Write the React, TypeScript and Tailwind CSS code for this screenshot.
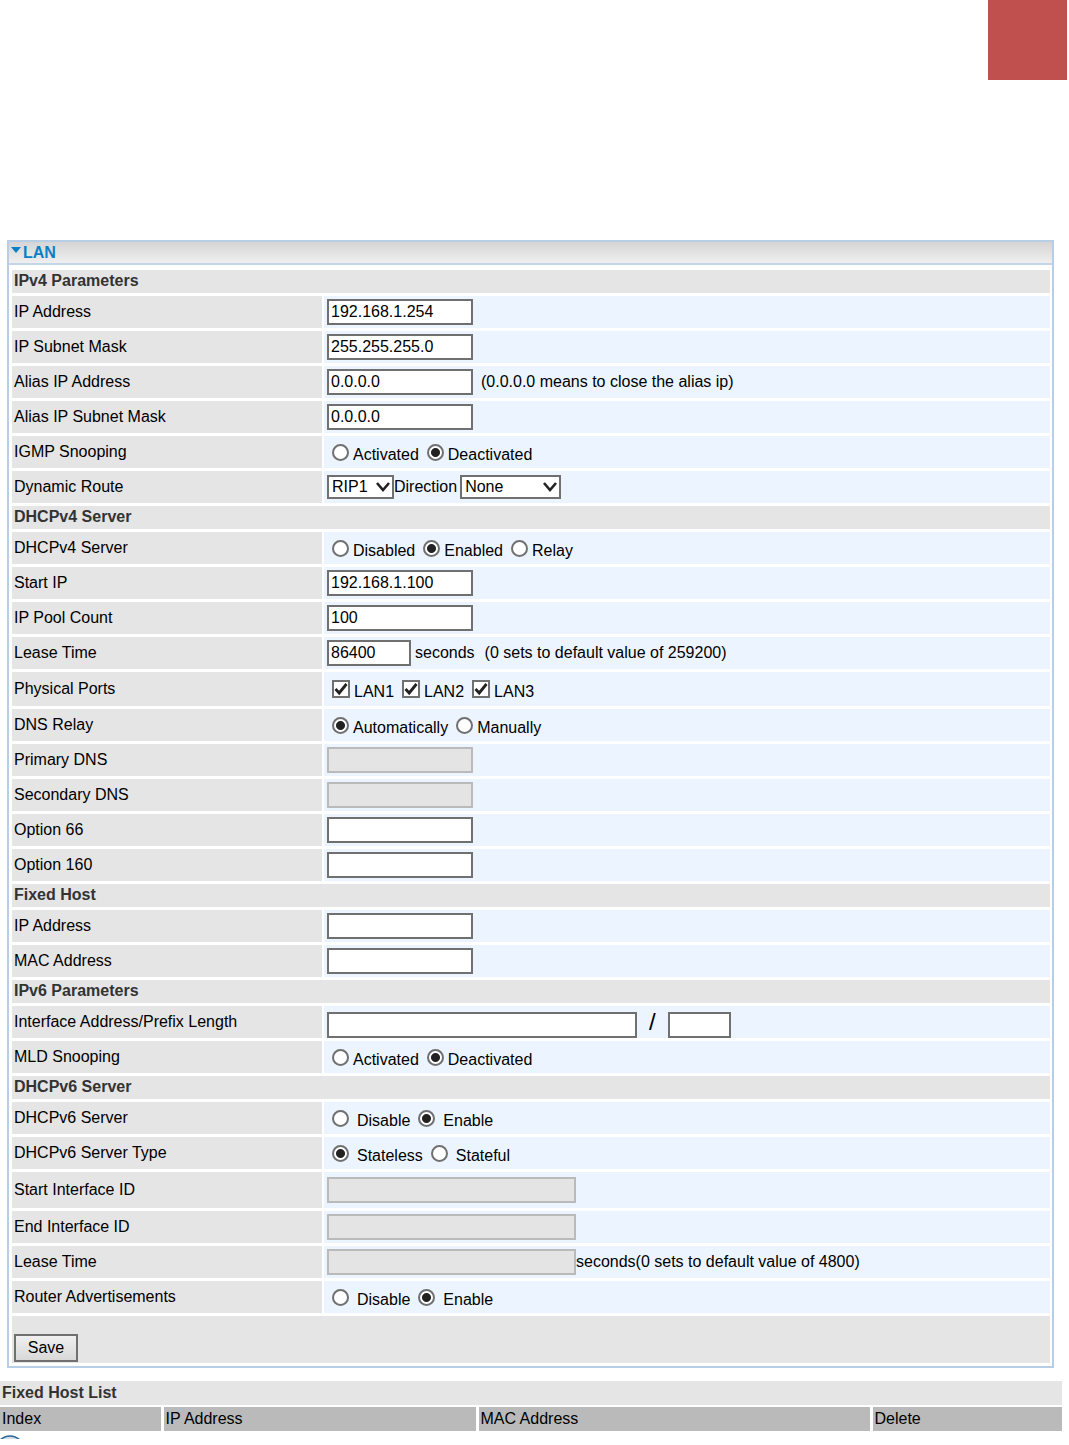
import { useId } from "react";
import type { ReactNode } from "react";

function Section({ title }: { title: string }) {
  return (
    <h3 className="h-[23px] bg-[#e5e5e5] pl-0.5 text-[16px] leading-[22px] font-bold text-[#333]">
      {title}
    </h3>
  );
}

type RowProps = {
  label: string;
  htmlFor?: string;
  className?: string;
  children: ReactNode;
};

function Row({ label, htmlFor, className = "h-8", children }: RowProps) {
  return (
    <div className={`flex gap-0.5 ${className}`}>
      <div className="flex w-[310px] shrink-0 items-center bg-[#e5e5e5] pb-[inherit] pl-0.5">
        {htmlFor ? <label htmlFor={htmlFor}>{label}</label> : <span>{label}</span>}
      </div>
      <div className="flex flex-1 items-center bg-[#ecf5ff] pl-[3px]">{children}</div>
    </div>
  );
}

type FieldProps = {
  id?: string;
  value?: string;
  width?: string;
  disabled?: boolean;
  label?: string;
};

function Field({ id, value = "", width = "w-[146px]", disabled, label }: FieldProps) {
  return (
    <input
      id={id}
      type="text"
      defaultValue={value}
      disabled={disabled}
      aria-label={label}
      className={`h-[26px] shrink-0 border-2 border-[#707070] bg-white px-0.5 disabled:border-[#bababa] disabled:bg-[#e4e4e4] ${width}`}
    />
  );
}

function TextRow({ label, className, after, ...field }: FieldProps & { label: string; className?: string; after?: ReactNode }) {
  const id = useId();
  return (
    <Row label={label} htmlFor={id} className={className}>
      <Field id={id} {...field} />
      {after}
    </Row>
  );
}

type RadiosProps = {
  name: string;
  options: string[];
  selected: string;
  spaced?: boolean;
};

function Radios({ name, options, selected, spaced }: RadiosProps) {
  return (
    <div className="flex gap-2 pl-[5px]">
      {options.map((option) => (
        <label key={option} className={`flex items-center ${spaced ? "gap-2" : "gap-1"}`}>
          <input
            type="radio"
            name={name}
            defaultChecked={option === selected}
            className="size-[17px] appearance-none rounded-full border-2 border-[#707070] bg-white checked:bg-[radial-gradient(circle,#222_4px,#fff_5px)]"
          />
          <span className="pt-1.5">{option}</span>
        </label>
      ))}
    </div>
  );
}

function Port({ name }: { name: string }) {
  return (
    <label className="flex items-center gap-1">
      <span className="grid">
        <input
          type="checkbox"
          defaultChecked
          className="peer col-start-1 row-start-1 size-[18px] appearance-none border-2 border-[#707070] bg-white"
        />
        <svg
          viewBox="0 0 18 18"
          className="pointer-events-none invisible col-start-1 row-start-1 size-[18px] peer-checked:visible"
        >
          <path d="M3.5 9L7.2 13L14.5 4" fill="none" stroke="#222" strokeWidth="2.8" />
        </svg>
      </span>
      <span className="pt-1.5">{name}</span>
    </label>
  );
}

function Dropdown({ id, options, width }: { id: string; options: string[]; width: string }) {
  return (
    <span className={`grid h-6 shrink-0 ${width}`}>
      <select
        id={id}
        className="col-start-1 row-start-1 h-6 w-full appearance-none border-2 border-[#707070] bg-white pl-[3px] leading-5"
      >
        {options.map((option) => (
          <option key={option}>{option}</option>
        ))}
      </select>
      <svg
        viewBox="0 0 14 10"
        className="pointer-events-none col-start-1 row-start-1 mr-1 h-2.5 w-3.5 self-center justify-self-end"
      >
        <path d="M1 1L7 8L13 1" fill="none" stroke="#222" strokeWidth="2.6" />
      </svg>
    </span>
  );
}

function LanPanel() {
  return (
    <form
      onSubmit={(e) => e.preventDefault()}
      className="mr-[15px] ml-[7px] border-2 border-[#b8cde6]"
    >
      <h2 className="flex h-[23px] items-center gap-0.5 border-b-2 border-[#c4d5ea] bg-linear-to-b from-[#d5d5d5] to-[#efefef] pl-0.5 font-bold text-[#0a80c4]">
        <svg viewBox="0 0 10 6" className="mb-1.5 h-1.5 w-2.5">
          <path d="M0 0H10L5 6Z" fill="currentColor" />
        </svg>
        LAN
      </h2>
      <div className="flex flex-col gap-[3px] pt-[5px] pr-0.5 pb-[3px] pl-[3px]">
        <Section title="IPv4 Parameters" />
        <TextRow label="IP Address" value="192.168.1.254" />
        <TextRow label="IP Subnet Mask" value="255.255.255.0" />
        <TextRow
          label="Alias IP Address"
          value="0.0.0.0"
          after={<span className="pl-2">(0.0.0.0 means to close the alias ip)</span>}
        />
        <TextRow label="Alias IP Subnet Mask" value="0.0.0.0" />
        <Row label="IGMP Snooping">
          <Radios name="igmp" options={["Activated", "Deactivated"]} selected="Deactivated" />
        </Row>
        <Row label="Dynamic Route" htmlFor="route">
          <Dropdown id="route" options={["RIP1", "RIP2"]} width="w-[67px]" />
          <label htmlFor="direction" className="pr-[3px]">Direction</label>
          <Dropdown id="direction" options={["None", "Both", "IN only", "OUT only"]} width="w-[101px]" />
        </Row>

        <Section title="DHCPv4 Server" />
        <Row label="DHCPv4 Server">
          <Radios name="dhcp4" options={["Disabled", "Enabled", "Relay"]} selected="Enabled" />
        </Row>
        <TextRow label="Start IP" value="192.168.1.100" />
        <TextRow label="IP Pool Count" value="100" />
        <TextRow
          label="Lease Time"
          value="86400"
          width="w-[84px]"
          after={
            <>
              <span className="pl-1">seconds</span>
              <span className="pl-2.5">(0 sets to default value of 259200)</span>
            </>
          }
        />
        <Row label="Physical Ports" className="h-[34px]">
          <div className="flex gap-2 pl-[5px]">
            <Port name="LAN1" />
            <Port name="LAN2" />
            <Port name="LAN3" />
          </div>
        </Row>
        <Row label="DNS Relay">
          <Radios name="dns" options={["Automatically", "Manually"]} selected="Automatically" />
        </Row>
        <TextRow label="Primary DNS" disabled />
        <TextRow label="Secondary DNS" disabled />
        <TextRow label="Option 66" />
        <TextRow label="Option 160" />

        <Section title="Fixed Host" />
        <TextRow label="IP Address" />
        <TextRow label="MAC Address" />

        <Section title="IPv6 Parameters" />
        <Row label="Interface Address/Prefix Length" htmlFor="interface">
          <div className="flex items-end self-end">
            <Field id="interface" width="w-[310px]" />
            <span className="px-3 pb-1 text-2xl leading-6">/</span>
            <Field width="w-[63px]" label="Prefix length" />
          </div>
        </Row>
        <Row label="MLD Snooping">
          <Radios name="mld" options={["Activated", "Deactivated"]} selected="Deactivated" />
        </Row>

        <Section title="DHCPv6 Server" />
        <Row label="DHCPv6 Server">
          <Radios name="dhcp6" options={["Disable", "Enable"]} selected="Enable" spaced />
        </Row>
        <Row label="DHCPv6 Server Type">
          <Radios name="type" options={["Stateless", "Stateful"]} selected="Stateless" spaced />
        </Row>
        <TextRow label="Start Interface ID" width="w-[249px]" disabled className="h-9" />
        <TextRow label="End Interface ID" width="w-[249px]" disabled />
        <TextRow
          label="Lease Time"
          width="w-[249px]"
          disabled
          after={<span>seconds(0 sets to default value of 4800)</span>}
        />
        <Row label="Router Advertisements">
          <Radios name="ra" options={["Disable", "Enable"]} selected="Enable" spaced />
        </Row>

        <div className="flex h-[47px] items-end bg-[#e5e5e5] pb-px pl-0.5">
          <button
            type="submit"
            className="h-7 w-16 border-2 border-[#707070] bg-linear-to-b from-[#f0f0f0] to-[#d8d8d8]"
          >
            Save
          </button>
        </div>
      </div>
    </form>
  );
}

function FixedHostList() {
  return (
    <section className="mt-[13px] mr-[7px]">
      <h3 className="h-6 bg-[#e5e5e5] pl-0.5 leading-6 font-bold text-[#333]">Fixed Host List</h3>
      <table className="mt-0.5 w-full table-fixed border-collapse text-left">
        <thead>
          <tr className="h-6 bg-[#bababa]">
            <th className="w-[162px] p-0 pl-0.5 font-normal">Index</th>
            <th className="w-[315px] border-l-3 border-white p-0 pl-0.5 font-normal">IP Address</th>
            <th className="w-[394px] border-l-3 border-white p-0 pl-0.5 font-normal">MAC Address</th>
            <th className="border-l-3 border-white p-0 pl-0.5 font-normal">Delete</th>
          </tr>
        </thead>
      </table>
      <svg viewBox="0 0 20 4" className="mt-1 h-1 w-5">
        <circle cx="10" cy="15" r="14" fill="#cfdfee" stroke="#2d6596" strokeWidth="1.6" />
      </svg>
    </section>
  );
}

export default function App() {
  return (
    <main className="bg-white pb-1.5 font-['Liberation_Sans',Arial,sans-serif] text-[16px] leading-5 text-black">
      <div className="mb-40 flex justify-end pr-0.5">
        <div className="h-20 w-[79px] bg-[#c0504d]" />
      </div>
      <LanPanel />
      <FixedHostList />
    </main>
  );
}
